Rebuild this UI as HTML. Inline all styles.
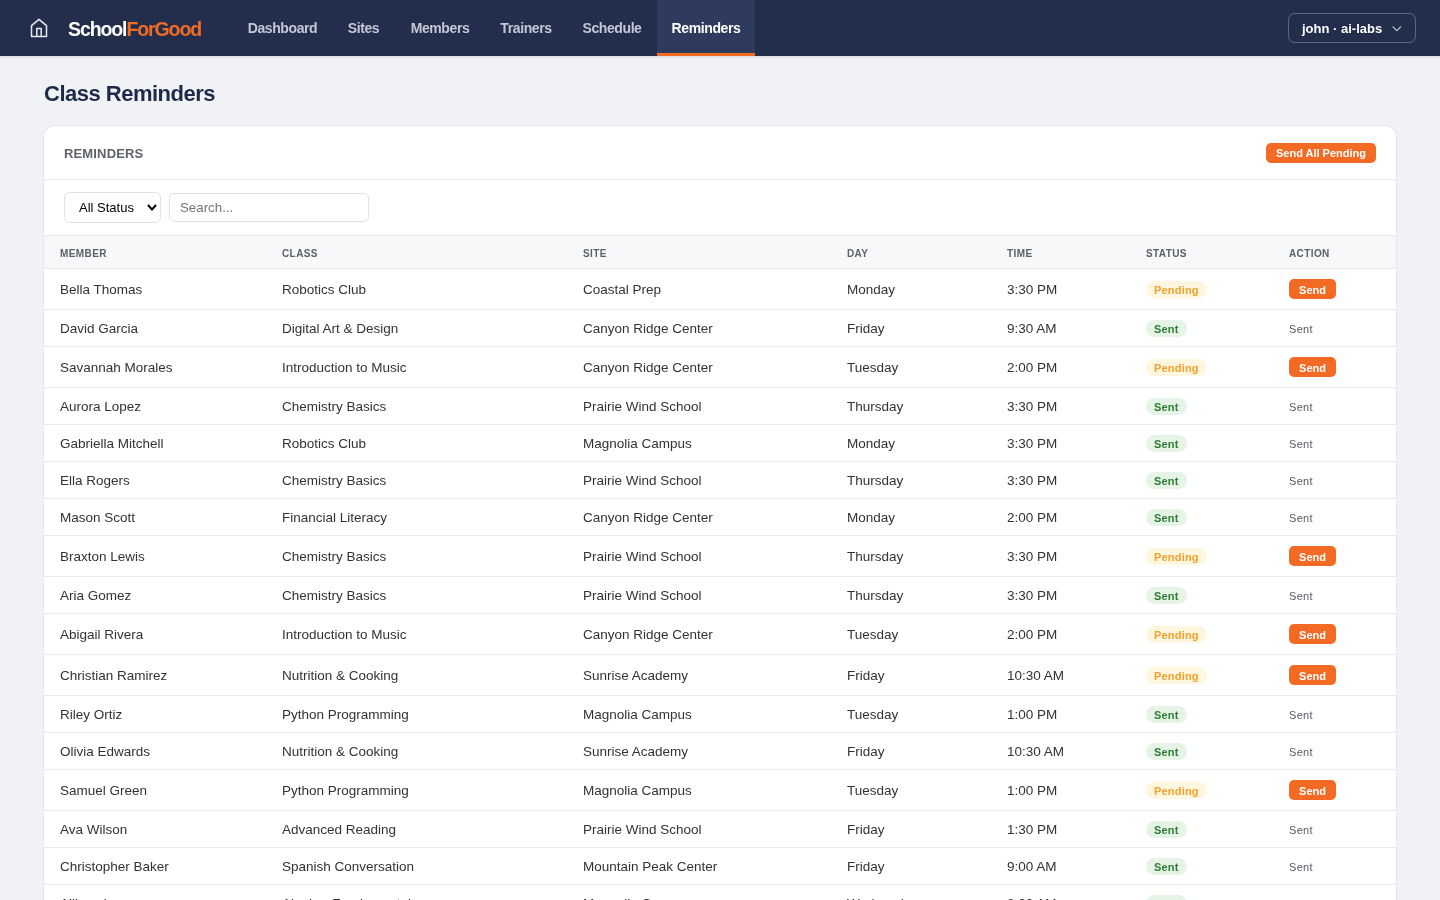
<!DOCTYPE html>
<html>
<head>
<meta charset="utf-8">
<style>
*{box-sizing:border-box;margin:0;padding:0}
html,body{width:1440px;height:900px;overflow:hidden}
body{background:#f1f2f5;font-family:"Liberation Sans",sans-serif;color:#333;position:relative}
.wrap{position:absolute;left:0;top:0;width:1440px;height:900px;will-change:transform}
.nav{position:absolute;left:0;top:0;width:1440px;height:56px;background:#232e4d;box-shadow:0 1px 3px rgba(0,0,0,.12)}
.home{position:absolute;left:30px;top:18px}
.logo{position:absolute;left:68px;top:17px;font-size:19.5px;font-weight:bold;letter-spacing:-1.1px;color:#fff;line-height:24px;white-space:nowrap}
.logo span{color:#f26b22}
.ni{position:absolute;top:0;height:56px;line-height:56px;font-size:14px;font-weight:bold;color:#c3c8d4;text-align:center;white-space:nowrap;letter-spacing:-0.4px}
.ni.act{background:#2e3a5e;color:#fff;border-bottom:3px solid #f26b22;line-height:56px}
.user{position:absolute;left:1288px;top:13px;width:128px;height:30px;border:1px solid rgba(255,255,255,.28);border-radius:7px;color:#fff;font-size:13px;font-weight:bold;line-height:28px;padding-left:13px;padding-top:1px;white-space:nowrap}
.user svg{position:absolute;left:103px;top:12px}
h1{position:absolute;left:44px;top:80px;font-size:22px;font-weight:bold;color:#1f2a4a;letter-spacing:-0.5px;line-height:28px;white-space:nowrap}
.card{position:absolute;left:43px;top:125px;width:1354px;height:900px;background:#fff;border:1px solid #e4e6ea;border-radius:12px;overflow:hidden}
.ch{position:absolute;left:0;top:0;width:100%;height:54px;border-bottom:1px solid #e8eaee}
.ch .t{position:absolute;left:20px;top:20px;font-size:13px;font-weight:bold;color:#5d626b;line-height:16px;letter-spacing:0.15px}
.btn-all{position:absolute;left:1222px;top:17px;width:110px;height:20px;background:#f26a24;border-radius:5px;color:#fff;font-size:11px;font-weight:bold;line-height:20px;text-align:center}
.flt{position:absolute;left:0;top:54px;width:100%;height:56px;border-bottom:1px solid #e8eaee}
.sel{position:absolute;left:20px;top:12px;width:97px;height:31px;border:1px solid #dfe1e5;border-radius:6px;font-size:13px;color:#000;line-height:29px;padding-left:14px}
.sel svg{position:absolute;left:82px;top:11px}
.srch{position:absolute;left:125px;top:13px;width:200px;height:29px;border:1px solid #dfe1e5;border-radius:5px;font-size:13.3px;color:#757575;line-height:27px;padding-left:10px}
table{position:absolute;left:0;top:110px;width:1352px;border-collapse:collapse;table-layout:fixed}
th{height:32px;background:#f7f8fa;border-bottom:1px solid #e6e8ec;text-align:left;font-size:10px;font-weight:bold;color:#5b6069;letter-spacing:0.4px;padding:4px 0 0 16px;line-height:16px}
td{border-bottom:1px solid #e8eaee;padding:2px 0 0 16px;font-size:13.5px;color:#333;white-space:nowrap;line-height:16px}
tr.p td{height:41px}
tr.s td{height:37px}
.pill{display:inline-block;position:relative;top:0px;letter-spacing:0.2px;height:17px;line-height:17px;padding-top:1px !important;border-radius:9px;padding:0 8px;font-size:11px;font-weight:bold;vertical-align:middle}
.pill.pe{background:#fff6df;color:#f2a12c}
.pill.se{background:#e6f4e8;color:#2e7d32}
.send{display:inline-block;position:relative;top:-1px;width:47px;height:20px;line-height:20px;padding-top:1px;background:#f26a24;border-radius:5px;color:#fff;font-size:11px;font-weight:bold;text-align:center;vertical-align:middle}
.sent{font-size:11px;color:#555a63;letter-spacing:0.3px}
</style>
</head>
<body>
<div class="wrap">
<div class="nav">
  <svg class="home" width="19" height="20" viewBox="0 0 19 20"><path d="M1.5 7.6 L9 1.4 L16.5 7.6 V18.6 H1.5 Z M6.8 18.6 V10.4 H11.2 V18.6" fill="none" stroke="#e8eaf0" stroke-width="1.5" stroke-linejoin="round" stroke-linecap="round"/></svg>
  <div class="logo">School<span>ForGood</span></div>
  <div class="ni" style="left:233px;width:99px">Dashboard</div>
  <div class="ni" style="left:332px;width:63px">Sites</div>
  <div class="ni" style="left:395px;width:90px">Members</div>
  <div class="ni" style="left:485px;width:82px">Trainers</div>
  <div class="ni" style="left:567px;width:90px">Schedule</div>
  <div class="ni act" style="left:657px;width:98px">Reminders</div>
  <div class="user">john · ai-labs<svg width="10" height="6" viewBox="0 0 10 6"><path d="M1 0.8 L4.8 4.6 L8.6 0.8" fill="none" stroke="#c3c8d4" stroke-width="1.2" stroke-linecap="round" stroke-linejoin="round"/></svg></div>
</div>
<h1>Class Reminders</h1>
<div class="card">
  <div class="ch"><div class="t">REMINDERS</div><div class="btn-all">Send All Pending</div></div>
  <div class="flt">
    <div class="sel">All Status<svg width="10" height="7" viewBox="0 0 10 7"><path d="M1 1 L5 5.5 L9 1" fill="none" stroke="#000" stroke-width="2"/></svg></div>
    <div class="srch">Search...</div>
  </div>
  <table>
    <colgroup><col style="width:222px"><col style="width:301px"><col style="width:264px"><col style="width:160px"><col style="width:139px"><col style="width:143px"><col style="width:123px"></colgroup>
    <thead><tr><th>MEMBER</th><th>CLASS</th><th>SITE</th><th>DAY</th><th>TIME</th><th>STATUS</th><th>ACTION</th></tr></thead>
    <tbody>
      <tr class="p"><td>Bella Thomas</td><td>Robotics Club</td><td>Coastal Prep</td><td>Monday</td><td>3:30 PM</td><td><span class="pill pe">Pending</span></td><td><span class="send">Send</span></td></tr>
      <tr class="s"><td>David Garcia</td><td>Digital Art &amp; Design</td><td>Canyon Ridge Center</td><td>Friday</td><td>9:30 AM</td><td><span class="pill se">Sent</span></td><td><span class="sent">Sent</span></td></tr>
      <tr class="p"><td>Savannah Morales</td><td>Introduction to Music</td><td>Canyon Ridge Center</td><td>Tuesday</td><td>2:00 PM</td><td><span class="pill pe">Pending</span></td><td><span class="send">Send</span></td></tr>
      <tr class="s"><td>Aurora Lopez</td><td>Chemistry Basics</td><td>Prairie Wind School</td><td>Thursday</td><td>3:30 PM</td><td><span class="pill se">Sent</span></td><td><span class="sent">Sent</span></td></tr>
      <tr class="s"><td>Gabriella Mitchell</td><td>Robotics Club</td><td>Magnolia Campus</td><td>Monday</td><td>3:30 PM</td><td><span class="pill se">Sent</span></td><td><span class="sent">Sent</span></td></tr>
      <tr class="s"><td>Ella Rogers</td><td>Chemistry Basics</td><td>Prairie Wind School</td><td>Thursday</td><td>3:30 PM</td><td><span class="pill se">Sent</span></td><td><span class="sent">Sent</span></td></tr>
      <tr class="s"><td>Mason Scott</td><td>Financial Literacy</td><td>Canyon Ridge Center</td><td>Monday</td><td>2:00 PM</td><td><span class="pill se">Sent</span></td><td><span class="sent">Sent</span></td></tr>
      <tr class="p"><td>Braxton Lewis</td><td>Chemistry Basics</td><td>Prairie Wind School</td><td>Thursday</td><td>3:30 PM</td><td><span class="pill pe">Pending</span></td><td><span class="send">Send</span></td></tr>
      <tr class="s"><td>Aria Gomez</td><td>Chemistry Basics</td><td>Prairie Wind School</td><td>Thursday</td><td>3:30 PM</td><td><span class="pill se">Sent</span></td><td><span class="sent">Sent</span></td></tr>
      <tr class="p"><td>Abigail Rivera</td><td>Introduction to Music</td><td>Canyon Ridge Center</td><td>Tuesday</td><td>2:00 PM</td><td><span class="pill pe">Pending</span></td><td><span class="send">Send</span></td></tr>
      <tr class="p"><td>Christian Ramirez</td><td>Nutrition &amp; Cooking</td><td>Sunrise Academy</td><td>Friday</td><td>10:30 AM</td><td><span class="pill pe">Pending</span></td><td><span class="send">Send</span></td></tr>
      <tr class="s"><td>Riley Ortiz</td><td>Python Programming</td><td>Magnolia Campus</td><td>Tuesday</td><td>1:00 PM</td><td><span class="pill se">Sent</span></td><td><span class="sent">Sent</span></td></tr>
      <tr class="s"><td>Olivia Edwards</td><td>Nutrition &amp; Cooking</td><td>Sunrise Academy</td><td>Friday</td><td>10:30 AM</td><td><span class="pill se">Sent</span></td><td><span class="sent">Sent</span></td></tr>
      <tr class="p"><td>Samuel Green</td><td>Python Programming</td><td>Magnolia Campus</td><td>Tuesday</td><td>1:00 PM</td><td><span class="pill pe">Pending</span></td><td><span class="send">Send</span></td></tr>
      <tr class="s"><td>Ava Wilson</td><td>Advanced Reading</td><td>Prairie Wind School</td><td>Friday</td><td>1:30 PM</td><td><span class="pill se">Sent</span></td><td><span class="sent">Sent</span></td></tr>
      <tr class="s"><td>Christopher Baker</td><td>Spanish Conversation</td><td>Mountain Peak Center</td><td>Friday</td><td>9:00 AM</td><td><span class="pill se">Sent</span></td><td><span class="sent">Sent</span></td></tr>
      <tr class="s"><td>Allison Lee</td><td>Algebra Fundamentals</td><td>Magnolia Campus</td><td>Wednesday</td><td>8:00 AM</td><td><span class="pill se">Sent</span></td><td><span class="sent">Sent</span></td></tr>
    </tbody>
  </table>
</div>
</div>
</body>
</html>
